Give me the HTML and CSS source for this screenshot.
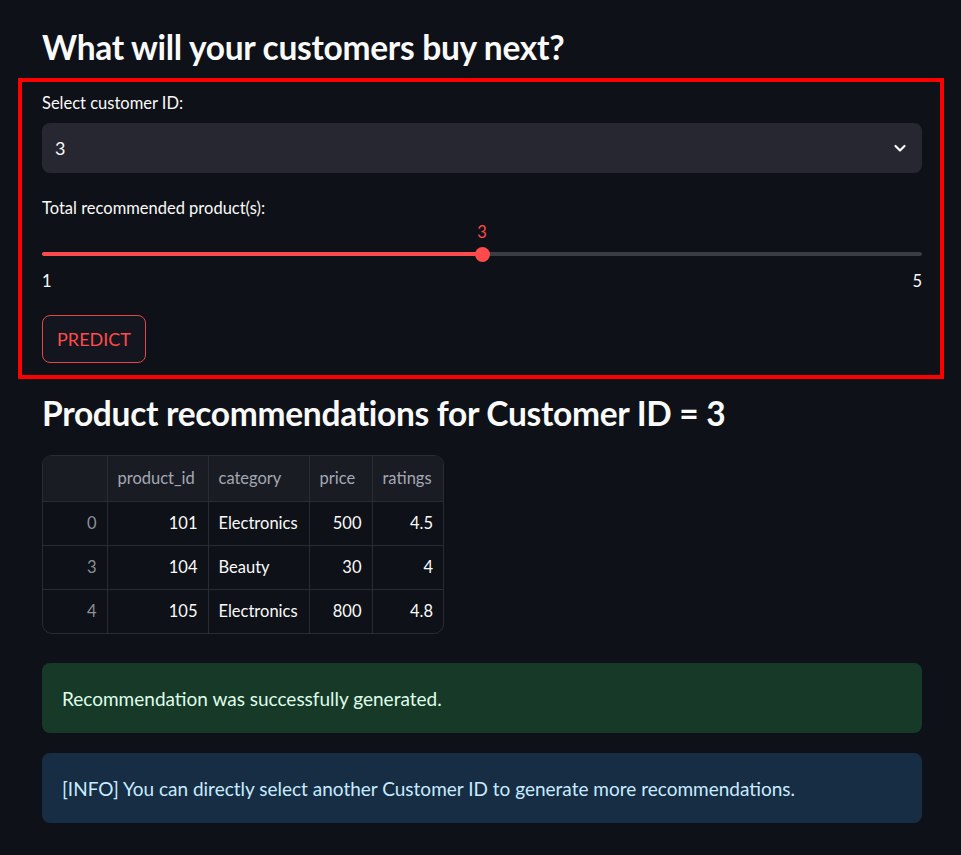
FILE: index.html
```html
<!DOCTYPE html>
<html>
<head>
<meta charset="utf-8">
<link rel="stylesheet" href="styles.css">
</head>
<body>
<div class="app">
  <h1 class="title">What will your customers buy next?</h1>
  <div class="form-box">
    <div class="field">
      <div class="label">Select customer ID:</div>
      <div class="select">
        <span class="select-value">3</span>
        <svg class="chevron" width="16" height="16" viewBox="0 0 16 16"><path d="M3.5 6 L8 10.5 L12.5 6" fill="none" stroke="#fafafa" stroke-width="2.2" stroke-linecap="round" stroke-linejoin="round"/></svg>
      </div>
    </div>
    <div class="field slider-field">
      <div class="label">Total recommended product(s):</div>
      <div class="slider">
        <div class="slider-track">
          <div class="slider-fill" style="width:50%"></div>
          <div class="slider-thumb" style="left:50%">
            <span class="slider-value">3</span>
          </div>
        </div>
        <div class="slider-minmax"><span>1</span><span>5</span></div>
      </div>
    </div>
    <button class="btn">PREDICT</button>
  </div>
  <h2 class="title title2">Product recommendations for Customer ID = 3</h2>
  <div class="table-wrap">
    <table class="df">
      <thead>
        <tr><th class="c-idx"></th><th class="c-pid">product_id</th><th class="c-cat">category</th><th class="c-price">price</th><th class="c-rat">ratings</th></tr>
      </thead>
      <tbody>
        <tr><td class="idx">0</td><td class="num">101</td><td>Electronics</td><td class="num">500</td><td class="num">4.5</td></tr>
        <tr><td class="idx">3</td><td class="num">104</td><td>Beauty</td><td class="num">30</td><td class="num">4</td></tr>
        <tr><td class="idx">4</td><td class="num">105</td><td>Electronics</td><td class="num">800</td><td class="num">4.8</td></tr>
      </tbody>
    </table>
  </div>
  <div class="alert success">Recommendation was successfully generated.</div>
  <div class="alert info">[INFO] You can directly select another Customer ID to generate more recommendations.</div>
</div>
</body>
</html>
```

FILE: styles.css
```css
html, body {
  margin: 0;
  padding: 0;
  background: #0e1117;
}
body {
  font-family: "Lato", "Noto Sans", sans-serif;
  color: #fafafa;
  width: 961px;
  height: 855px;
  overflow: hidden;
}
.app {
  padding: 26px 0 0 0;
}
.title {
  margin: 0 42px;
  font-size: 33.5px;
  font-weight: 700;
  line-height: 42px;
  letter-spacing: -0.3px;
}
.form-box {
  margin: 10px 17px 0 18px;
  border: 4px solid #ff0000;
  padding: 9px 18px 12px 20px;
}
.label {
  font-size: 16.5px;
  line-height: 24px;
  margin-bottom: 8px;
}
.select {
  height: 50px;
  background: #262730;
  border-radius: 8px;
  display: flex;
  align-items: center;
  justify-content: space-between;
  padding: 0 14px 0 13px;
  font-size: 18px;
}
.chevron {
  display: block;
}
.slider-field {
  margin-top: 23px;
}
.slider-field .label {
  margin-bottom: 0;
}
.slider {
  padding-top: 32px;
}
.slider-track {
  position: relative;
  height: 4px;
  border-radius: 2px;
  background: #3b3d45;
}
.slider-fill {
  position: absolute;
  left: 0;
  top: 0;
  bottom: 0;
  background: #ff4b4b;
  border-radius: 2px;
}
.slider-thumb {
  position: absolute;
  top: 50%;
  width: 15px;
  height: 15px;
  margin: -7.5px 0 0 -7.5px;
  border-radius: 50%;
  background: #ff4b4b;
}
.slider-value {
  position: absolute;
  left: 50%;
  bottom: 20px;
  transform: translateX(-50%);
  color: #ff4b4b;
  font-size: 16.5px;
  line-height: 20px;
}
.slider-minmax {
  display: flex;
  justify-content: space-between;
  font-size: 16.5px;
  line-height: 20px;
  margin-top: 15px;
}
.btn {
  margin-top: 24px;
  display: block;
  height: 48px;
  width: 104px;
  background: #13161e;
  border: 1px solid #e0484c;
  border-radius: 8px;
  color: #ff4b4b;
  font-family: inherit;
  font-size: 18px;
  padding: 0;
}
.title2 {
  margin-top: 13px;
}
.table-wrap {
  margin: 21px 0 0 42px;
  width: 400px;
  border: 1px solid #2a2c34;
  border-radius: 10px;
  overflow: hidden;
}
.df {
  border-collapse: collapse;
  font-size: 16.5px;
  width: 400px;
  table-layout: fixed;
}
.df th, .df td {
  box-sizing: border-box;
  border-right: 1px solid #2a2c34;
  border-bottom: 1px solid #2a2c34;
  padding: 0 10px;
  white-space: nowrap;
}
.df tr > :last-child { border-right: none; }
.df tbody tr:last-child td { border-bottom: none; }
.df th {
  height: 45px;
  background: #1a1c23;
  color: #a3a8b4;
  font-weight: 400;
  text-align: left;
}
.df td {
  height: 44px;
}
.c-idx { width: 64px; }
.c-pid { width: 101px; }
.c-cat { width: 101px; }
.c-price { width: 63px; }
.c-rat { width: 71px; }
.df td.idx {
  color: #8b8f99;
  text-align: right;
}
.df td.num { text-align: right; }
.alert {
  margin: 0 39px 0 42px;
  height: 70px;
  border-radius: 8px;
  display: flex;
  align-items: center;
  padding: 0 20px;
  font-size: 19px;
}
.success {
  margin-top: 29px;
  background: #173928;
  color: #dffde9;
}
.info {
  margin-top: 20px;
  background: #172d43;
  color: #c7ebff;
}
```
